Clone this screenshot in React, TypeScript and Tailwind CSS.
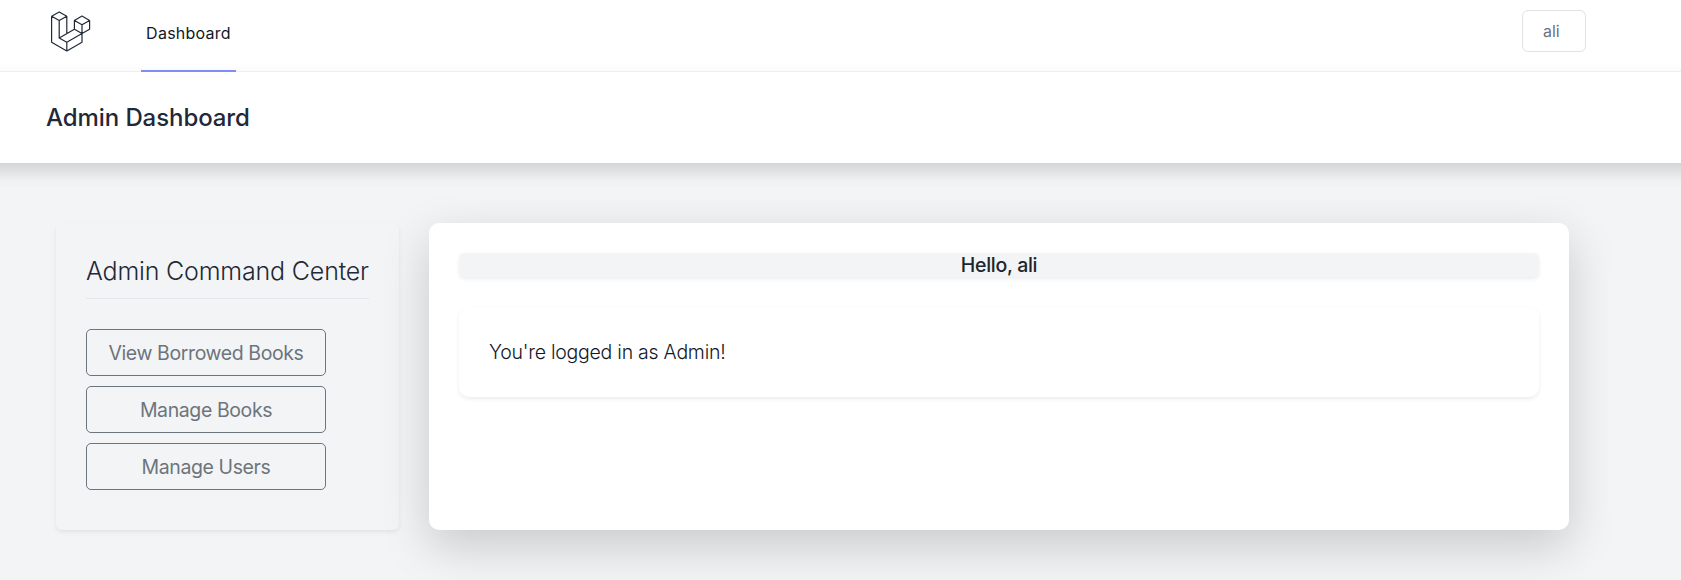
const items = ['View Borrowed Books', 'Manage Books', 'Manage Users'];

function Logo() {
  return (
    <svg viewBox="0 0 42 42" className="size-[42px]" fill="none" stroke="#1f2937" strokeWidth="1.2" strokeLinejoin="round">
      <path d="M2.6 6.2 10.2 1.9l7.6 4.3v17.4M2.6 6.2v26.1l15.2 8.6L33 32.3V23.6M2.6 6.2l7.6 4.4 7.6-4.4M10.2 10.6V28M10.2 28l15.2-8.7L33 23.6 17.8 32.3zM17.8 32.3v8.6M25.4 10.4 33 6.1l7.6 4.3v8.8L33 23.6M25.4 19.3v-8.9l7.6 4.4 7.6-4.4M33 14.8v8.8" />
    </svg>
  );
}

export default function App() {
  return (
    <div className="h-[580px] overflow-hidden bg-[#f3f4f6] font-['Inter','Liberation_Sans',sans-serif]">
      <nav className="flex h-[72px] border-b border-[#f3f4f6] bg-white pl-[49px] pr-[95px]">
        <div className="pt-[10px]"><Logo /></div>
        <a className="ml-[50px] flex h-[72px] w-[95px] justify-center border-b-2 border-[#818cf8] pt-[21px] text-[16px] leading-6 tracking-[0.25px] text-[#111827]">
          <span className="whitespace-nowrap">Dashboard</span>
        </a>
        <button className="ml-auto mt-[10px] h-[42px] w-16 rounded-md border border-[#e0e2e6] pl-5 text-left text-[16px] text-[#6b7280]">ali</button>
      </nav>
      <header className="-mx-10 flex h-[91px] items-center bg-white pl-[86px] shadow-[0_8px_16px_rgba(0,0,0,0.15)]">
        <h2 className="whitespace-nowrap text-[24px] font-[550] tracking-[-0.08px] text-[#1f2937]">Admin Dashboard</h2>
      </header>
      <main className="flex gap-[30px] pl-14 pt-[60px]">
        <aside className="h-[307px] w-[343px] rounded-md px-[30px] pt-[30px] shadow-[0_2px_4px_rgba(0,0,0,0.075)]">
          <h3 className="h-[46px] whitespace-nowrap border-b border-[#e5e7eb] text-[25px] font-light leading-9 tracking-[-0.18px] text-[#1f2937]">Admin Command Center</h3>
          <div className="mt-[30px] flex w-60 flex-col gap-[10px]">
            {items.map((t) => (
              <button key={t} className="h-[47px] whitespace-nowrap rounded-[5px] border border-[#6c757d] pt-[2px] text-[19.5px] font-normal tracking-[-0.4px] text-[#6c757d]">{t}</button>
            ))}
          </div>
        </aside>
        <section className="h-[307px] w-[1140px] rounded-[10px] bg-white p-[30px] shadow-[0_16px_48px_rgba(0,0,0,0.175)]">
          <h4 className="h-6 rounded-[5px] bg-[#f3f4f6] text-center text-[19.5px] font-medium leading-6 tracking-[-0.3px] text-[#212529] shadow-[0_2px_4px_rgba(0,0,0,0.075)]">Hello, ali</h4>
          <div className="mt-[30px] flex h-[90px] items-center rounded-[10px] bg-white px-[30px] pt-[2px] text-[19.5px] font-light tracking-[-0.25px] text-[#111827] shadow-[0_2px_4px_rgba(0,0,0,0.075)]">You're logged in as Admin!</div>
        </section>
      </main>
    </div>
  );
}
